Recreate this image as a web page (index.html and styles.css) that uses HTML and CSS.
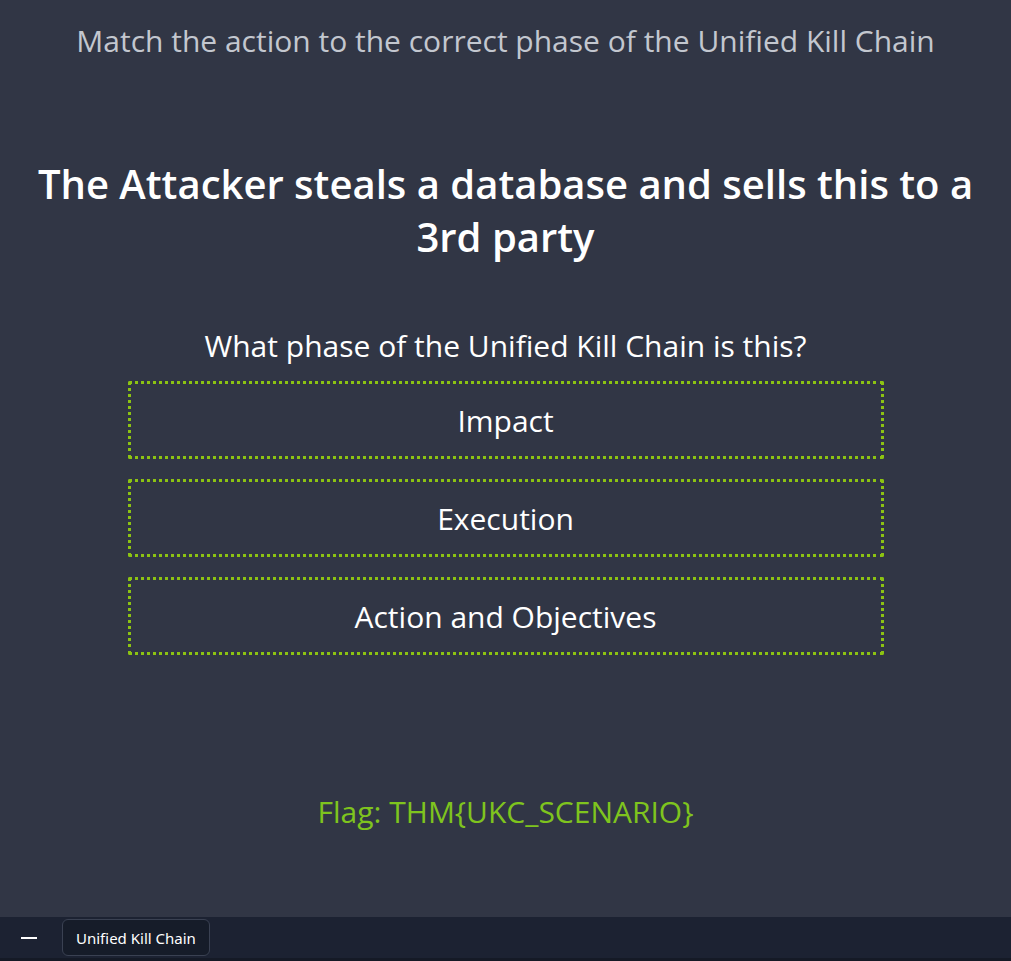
FILE: index.html
```html
<!DOCTYPE html>
<html>
<head>
<meta charset="utf-8">
<link rel="stylesheet" href="styles.css">
</head>
<body>
<main class="page">
  <p class="intro">Match the action to the correct phase of the Unified Kill Chain</p>
  <h1 class="scenario">The Attacker steals a database and sells this to a 3rd party</h1>
  <p class="question">What phase of the Unified Kill Chain is this?</p>
  <div class="options">
    <div class="option">Impact</div>
    <div class="option">Execution</div>
    <div class="option">Action and Objectives</div>
  </div>
  <p class="flag">Flag: THM{UKC_SCENARIO}</p>
</main>
<footer class="taskbar">
  <span class="minimize"></span>
  <button class="task">Unified Kill Chain</button>
</footer>
</body>
</html>
```
FILE: styles.css
```css
html, body {
  margin: 0;
  padding: 0;
  height: 100%;
}
body {
  background: #313645;
  font-family: "Open Sans", "Noto Sans", sans-serif;
  display: flex;
  flex-direction: column;
  overflow: hidden;
}
.page {
  flex: 1;
  display: flex;
  flex-direction: column;
  align-items: center;
  text-align: center;
}
.intro {
  margin: 21px 0 0;
  font-size: 30px;
  line-height: 40px;
  color: #c3c7cf;
}
.scenario {
  margin: 96px 0 0;
  width: 990px;
  font-size: 40px;
  line-height: 53px;
  font-weight: 600;
  color: #ffffff;
}
.question {
  margin: 63px 0 0;
  font-size: 30px;
  line-height: 40px;
  color: #ffffff;
}
.options {
  margin-top: 15px;
  width: 756px;
  display: flex;
  flex-direction: column;
  gap: 20px;
}
.option {
  height: 72px;
  border: 3px dotted #8cc312;
  display: flex;
  align-items: center;
  justify-content: center;
  font-size: 30px;
  color: #ffffff;
  border-radius: 2px;
}
.flag {
  margin: 137px 0 0;
  font-size: 30px;
  line-height: 40px;
  color: #7fc41e;
}
.taskbar {
  height: 44px;
  background: #1c2232;
  display: flex;
  align-items: center;
  border-bottom: 3px solid #151a26;
  box-sizing: border-box;
}
.minimize {
  width: 16px;
  height: 2px;
  background: #ffffff;
  margin: 0 25px 0 21px;
}
.task {
  height: 37px;
  padding: 0 13px;
  background: #161c29;
  border: 1px solid #3a4152;
  border-radius: 6px;
  color: #ffffff;
  font-family: "Noto Sans", sans-serif;
  font-size: 15px;
}
```
